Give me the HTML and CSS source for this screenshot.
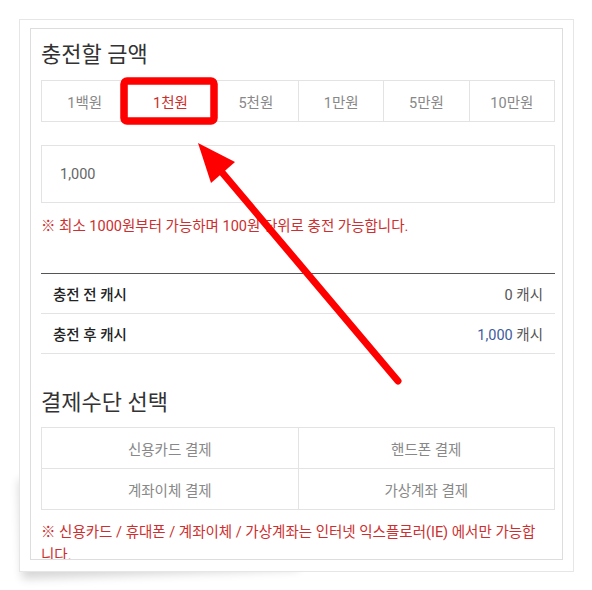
FILE: index.html
```html
<!DOCTYPE html>
<html lang="ko">
  <head>
    <meta charset="UTF-8" />
    <meta name="viewport" content="width=device-width, initial-scale=1.0" />
    <title>캐시 충전</title>
    <link rel="stylesheet" href="styles.css">
  </head>
  <body>
    <div class="paper">
      <div class="frame">
        <h2>충전할 금액</h2>

        <div class="amounts">
          <span>1백원</span>
          <span class="on">1천원</span>
          <span>5천원</span>
          <span>1만원</span>
          <span>5만원</span>
          <span>10만원</span>
        </div>

        <div class="amount-input">1,000</div>
        <p class="notice">※ 최소 1000원부터 가능하며 100원 단위로 충전 가능합니다.</p>

        <div class="summary">
          <div class="row">
            <strong>충전 전 캐시</strong>
            <span>0 캐시</span>
          </div>
          <div class="row">
            <strong>충전 후 캐시</strong>
            <span><em>1,000</em> 캐시</span>
          </div>
        </div>

        <h2 class="pay-title">결제수단 선택</h2>
        <div class="methods">
          <span>신용카드 결제</span>
          <span>핸드폰 결제</span>
          <span>계좌이체 결제</span>
          <span>가상계좌 결제</span>
        </div>
        <p class="notice notice-pay">※ 신용카드 / 휴대폰 / 계좌이체 / 가상계좌는 인터넷 익스플로러(IE) 에서만 가능합니다.</p>
      </div>
    </div>

    <!-- annotation drawn over the capture -->
    <svg class="markup" width="592" height="590" viewBox="0 0 592 590">
      <rect x="124" y="81" width="90" height="40" rx="3" fill="none" stroke="#ff0000" stroke-width="7.5" />
      <line x1="398" y1="381" x2="220" y2="170" stroke="#ff0000" stroke-width="7" stroke-linecap="round" />
      <polygon points="198,143 235,162 211,183" fill="#ff0000" />
    </svg>
  </body>
</html>
```

FILE: styles.css
```css
* {
  margin: 0;
  padding: 0;
  box-sizing: border-box;
  font-family: Roboto, "Noto Sans CJK KR", "Noto Sans", sans-serif;
}

body {
  background: #ffffff;
  width: 592px;
  height: 590px;
  position: relative;
  overflow: hidden;
}

.paper {
  position: relative;
  margin: 19px 0 0 19px;
  width: 555px;
  height: 553px;
  padding: 8px 10px 11px 10px;
  background: #fff;
  border: 1px solid #e6e6e6;
}

.paper::before {
  content: "";
  position: absolute;
  left: 6px;
  bottom: 5px;
  width: 50%;
  height: 18%;
  box-shadow: -6px 8px 10px rgba(0, 0, 0, 0.16);
  transform: rotate(-2deg);
  z-index: -1;
}

.frame {
  height: 100%;
  border: 1px solid #dddddd;
  padding: 11px 7px 0 10px;
  overflow: hidden;
}

h2 {
  font-size: 22px;
  font-weight: 400;
  line-height: 30px;
  color: #333;
}

.amounts {
  display: grid;
  grid-template-columns: repeat(6, 1fr);
  margin-top: 10px;
  border: 1px solid #e3e3e3;
  height: 42px;
}

.amounts span {
  display: flex;
  align-items: center;
  justify-content: center;
  font-size: 14.5px;
  color: #888;
  border-left: 1px solid #e3e3e3;
}

.amounts span:first-child {
  border-left: none;
}

.amounts .on {
  color: #c9302c;
}

.amount-input {
  margin-top: 23px;
  height: 58px;
  border: 1px solid #e3e3e3;
  padding: 0 18px;
  display: flex;
  align-items: center;
  font-size: 14.5px;
  color: #666;
}

.notice {
  margin-top: 14px;
  font-size: 14.5px;
  line-height: 20px;
  color: #cc2f2f;
}

.summary {
  margin-top: 36px;
  border-top: 1px solid #555;
}

.summary .row {
  display: flex;
  justify-content: space-between;
  align-items: center;
  height: 40px;
  padding: 0 12px;
  border-bottom: 1px solid #e3e3e3;
  font-size: 14.5px;
}

.summary strong {
  color: #222;
  font-weight: 500;
}

.summary span {
  color: #555;
}

.summary em {
  font-style: normal;
  color: #3d5c9f;
}

.pay-title {
  margin-top: 34px;
}

.methods {
  display: grid;
  grid-template-columns: 1fr 1fr;
  grid-auto-rows: 41px;
  margin-top: 9px;
  border-top: 1px solid #e3e3e3;
  border-left: 1px solid #e3e3e3;
}

.methods span {
  display: flex;
  align-items: center;
  justify-content: center;
  font-size: 14.5px;
  color: #888;
  border-right: 1px solid #e3e3e3;
  border-bottom: 1px solid #e3e3e3;
}

.notice-pay {
  margin-top: 11px;
  line-height: 23px;
  padding-right: 8px;
}

.markup {
  position: absolute;
  top: 0;
  left: 0;
  pointer-events: none;
}
```
